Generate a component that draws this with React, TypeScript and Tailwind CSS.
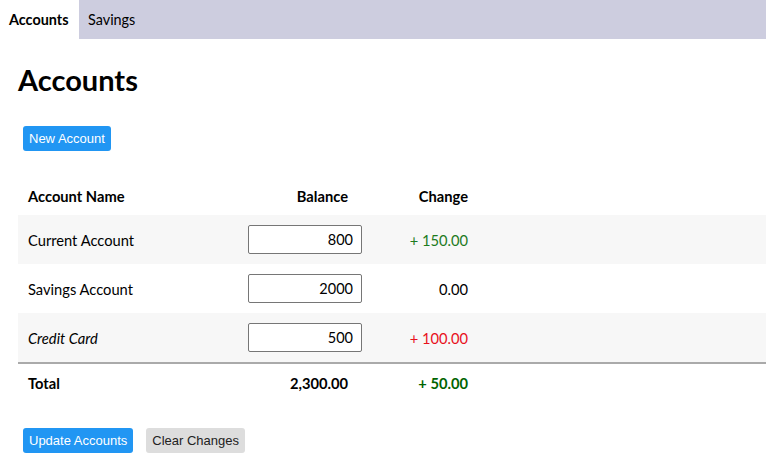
import React from "react";

const font = { fontFamily: "Lato, 'Open Sans', sans-serif" };

function Row({ name, value, change, changeClass, italic, shaded }: { name: string; value: string; change: string; changeClass: string; italic?: boolean; shaded?: boolean }) {
  return (
    <div className={`flex items-center h-[49px] ${shaded ? "bg-[#f7f7f7]" : "bg-white"}`}>
      <div className={`w-[220px] pl-[10px] text-[14.7px] text-black ${italic ? "italic" : ""}`}>{name}</div>
      <div className="w-[130px] flex justify-end pr-[6px]">
        <input
          readOnly
          value={value}
          className="w-[114px] h-[29px] border border-[#767676] rounded-[2px] bg-white text-right pr-[8px] text-[14.5px] text-black outline-none"
          style={font}
        />
      </div>
      <div className={`w-[110px] pr-[10px] text-right text-[14.7px] ${changeClass}`}>{change}</div>
      <div className="flex-1" />
    </div>
  );
}

export default function App() {
  return (
    <div className="w-[766px] h-[472px] bg-white overflow-hidden" style={font}>
      <div className="flex h-[39px] bg-[#cdcddf]">
        <div className="flex items-center w-[79px] pl-[9px] bg-white font-bold text-[14.4px] text-black">Accounts</div>
        <div className="flex items-center pl-[9px] text-[14.4px] text-black">Savings</div>
      </div>
      <div className="pl-[18px]">
        <h1 className="text-[29px] font-bold text-black leading-none mt-[26px]">Accounts</h1>
        <div className="mt-[31px] pl-[5px]">
          <button
            className="h-[25px] px-[6px] rounded-[3px] bg-[#2196f3] text-white text-[13px]"
            style={{ fontFamily: "'Liberation Sans', Arial, sans-serif" }}
          >
            New Account
          </button>
        </div>
        <div className="mt-[26px]">
          <div className="flex items-center h-[38px] font-bold text-[14.7px] text-black">
            <div className="w-[220px] pl-[10px]">Account Name</div>
            <div className="w-[130px] pr-[20px] text-right">Balance</div>
            <div className="w-[110px] pr-[10px] text-right">Change</div>
          </div>
          <Row name="Current Account" value="800" change="+ 150.00" changeClass="text-[#1e7b1e]" shaded />
          <Row name="Savings Account" value="2000" change="0.00" changeClass="text-black" />
          <Row name="Credit Card" value="500" change="+ 100.00" changeClass="text-[#e8111c]" italic shaded />
          <div className="border-t-2 border-[#aaaaaa] flex items-center h-[40px] font-bold text-[14.7px] text-black">
            <div className="w-[220px] pl-[10px]">Total</div>
            <div className="w-[130px] pr-[20px] text-right">2,300.00</div>
            <div className="w-[110px] pr-[10px] text-right text-[#006400]">+ 50.00</div>
          </div>
        </div>
        <div className="mt-[26px] pl-[5px] flex gap-[13px]" style={{ fontFamily: "'Liberation Sans', Arial, sans-serif" }}>
          <button className="h-[25px] px-[6px] rounded-[3px] bg-[#2196f3] text-white text-[13px]">Update Accounts</button>
          <button className="h-[25px] px-[6px] rounded-[3px] bg-[#dddddd] text-[#222] text-[13px]">Clear Changes</button>
        </div>
      </div>
    </div>
  );
}
